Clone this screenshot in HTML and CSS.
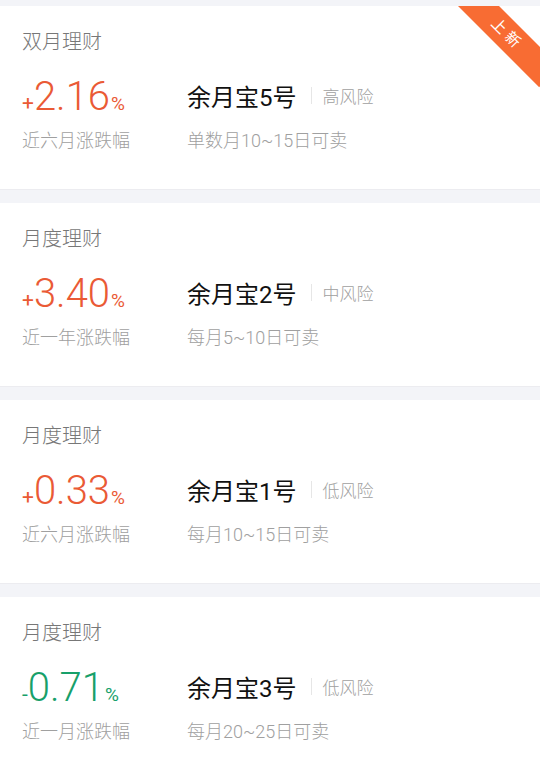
FILE: index.html
```html
<!DOCTYPE html>
<html lang="zh-CN">
<head>
    <meta charset="UTF-8">
    <meta name="viewport" content="width=device-width, initial-scale=1.0">
    <title>余月宝</title>
    <link rel="stylesheet" href="styles.css">
</head>
<body>
    <div class="list">
        <div class="card">
            <div class="ribbon">上新</div>
            <div class="card-title">双月理财</div>
            <div class="card-body">
                <div class="rate up"><span class="sign">+</span>2.16<span class="pct">%</span></div>
                <div class="product">
                    <span class="name">余月宝5号</span>
                    <span class="divider"></span>
                    <span class="risk">高风险</span>
                </div>
                <div class="label">近六月涨跌幅</div>
                <div class="label">单数月10~15日可卖</div>
            </div>
        </div>

        <div class="card">
            <div class="card-title">月度理财</div>
            <div class="card-body">
                <div class="rate up"><span class="sign">+</span>3.40<span class="pct">%</span></div>
                <div class="product">
                    <span class="name">余月宝2号</span>
                    <span class="divider"></span>
                    <span class="risk">中风险</span>
                </div>
                <div class="label">近一年涨跌幅</div>
                <div class="label">每月5~10日可卖</div>
            </div>
        </div>

        <div class="card">
            <div class="card-title">月度理财</div>
            <div class="card-body">
                <div class="rate up"><span class="sign">+</span>0.33<span class="pct">%</span></div>
                <div class="product">
                    <span class="name">余月宝1号</span>
                    <span class="divider"></span>
                    <span class="risk">低风险</span>
                </div>
                <div class="label">近六月涨跌幅</div>
                <div class="label">每月10~15日可卖</div>
            </div>
        </div>

        <div class="card">
            <div class="card-title">月度理财</div>
            <div class="card-body">
                <div class="rate down"><span class="sign">-</span>0.71<span class="pct">%</span></div>
                <div class="product">
                    <span class="name">余月宝3号</span>
                    <span class="divider"></span>
                    <span class="risk">低风险</span>
                </div>
                <div class="label">近一月涨跌幅</div>
                <div class="label">每月20~25日可卖</div>
            </div>
        </div>
    </div>
</body>
</html>
```

FILE: styles.css
```css
* {
    margin: 0;
    padding: 0;
    box-sizing: border-box;
}

body {
    font-family: Roboto, "Noto Sans CJK SC", sans-serif;
    background-color: #f3f4f8;
    overflow: hidden;
}

.list {
    padding-top: 6px;
}

.card {
    position: relative;
    overflow: hidden;
    height: 184px;
    margin-bottom: 13px;
    padding: 22px 22px 0;
    background: white;
    border-bottom: 1px solid #ececf0;
}

.card-title {
    font-size: 20px;
    line-height: 28px;
    color: #777;
    font-weight: 300;
}

.card-body {
    display: grid;
    grid-template-columns: 165px 1fr;
    grid-template-rows: 44px 40px;
    align-items: center;
    margin-top: 19px;
}

.rate {
    font-size: 40px;
    font-weight: 300;
    line-height: 44px;
    align-self: start;
}

.rate .sign {
    font-size: 21px;
    font-weight: 400;
}

.rate .pct {
    font-size: 19px;
    font-weight: 400;
    margin-left: 1px;
}

.up {
    color: #ea5a35;
}

.down {
    color: #17a06a;
}

.product {
    display: flex;
    align-items: center;
    margin-top: -3px;
}

.name {
    font-size: 24px;
    color: #111;
}

.divider {
    width: 1px;
    height: 17px;
    background: #e6e6e6;
    margin: 0 11px 0 14px;
}

.risk {
    font-size: 17px;
    color: #a0a0a0;
    font-weight: 300;
}

.label {
    font-size: 18px;
    color: #a0a0a0;
    font-weight: 300;
}

.ribbon {
    position: absolute;
    top: 14px;
    right: -27px;
    width: 120px;
    height: 29px;
    line-height: 29px;
    text-align: center;
    font-size: 15px;
    letter-spacing: 4px;
    color: white;
    background: #f86c33;
    transform: rotate(45deg);
}
```
